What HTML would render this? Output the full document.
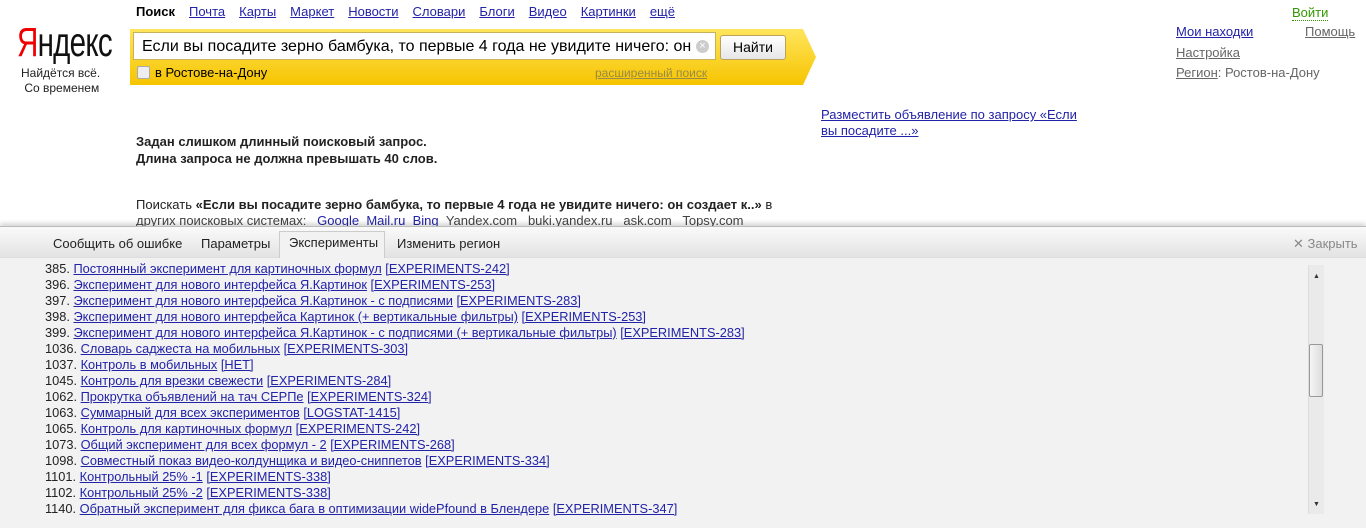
<!DOCTYPE html>
<html><head><meta charset="utf-8"><style>
body{margin:0;width:1366px;height:527px;overflow:hidden;background:#fff;font-family:"Liberation Sans",Arial,sans-serif;font-size:13px;position:relative}
a{color:#2323a8}
.abs{position:absolute;white-space:nowrap}
.nav a{margin-right:14px}
.g{color:#666}
#panel{position:absolute;left:0;top:226px;width:1366px;height:301px;background:#f2f2f2;border-top:1px solid #bbb;box-shadow:0 -3px 4px rgba(0,0,0,.15);overflow:hidden}
#tabs{height:30px;background:linear-gradient(#fafafa,#e3e3e3);position:relative;border-bottom:1px solid #ddd;z-index:2}
.tab{position:absolute;top:9px;font-size:13px;color:#222}
#list{position:absolute;left:45px;top:34px;font-size:12.8px;line-height:16px;color:#222;white-space:nowrap}
</style></head><body>
<div class="abs" style="left:17px;top:18px;font-size:41px;line-height:48px;letter-spacing:-1px;transform:scaleX(.72);transform-origin:left;color:#111"><span style="color:#e00">Я</span>ндекс</div>
<div class="abs" style="left:21px;top:66px;font-size:12px;color:#222;line-height:15px">Найдётся всё.<br>&nbsp;Со временем</div>
<div class="abs nav" style="left:136px;top:4px"><b style="margin-right:14px">Поиск</b><a href="#">Почта</a><a href="#">Карты</a><a href="#">Маркет</a><a href="#">Новости</a><a href="#">Словари</a><a href="#">Блоги</a><a href="#">Видео</a><a href="#">Картинки</a><a href="#">ещё</a></div>
<svg class="abs" style="left:130px;top:29px" width="688" height="56"><defs><linearGradient id="y" x1="0" y1="0" x2="0" y2="1"><stop offset="0" stop-color="#ffe55c"/><stop offset="1" stop-color="#f6c400"/></linearGradient></defs><path d="M0 0H673L686 28L673 56H0Z" fill="url(#y)"/></svg>
<div class="abs" style="left:133px;top:32px;height:28px;background:#fff;border:1px solid #c9b35a;font-size:16px;line-height:28px;padding-left:8px;box-sizing:border-box;width:583px">Если вы посадите зерно бамбука, то первые 4 года не увидите ничего: он<span style="position:absolute;right:6px;top:7px;width:13px;height:13px;border-radius:50%;background:#ccc;color:#fff;font-size:11px;line-height:13px;text-align:center">×</span></div>
<div class="abs" style="left:720px;top:35px;width:66px;height:25px;border:1px solid #b9a35a;border-radius:3px;background:linear-gradient(#fff,#e6e6e6);box-sizing:border-box;text-align:center;line-height:23px;font-size:14px">Найти</div>
<div class="abs" style="left:137px;top:66px;width:11px;height:11px;border:1px solid #aaa;border-radius:2px;background:#eee"></div>
<div class="abs" style="left:155px;top:65px;font-size:13px">в Ростове-на-Дону</div>
<div class="abs" style="left:595px;top:66px;font-size:12px;color:#998a45;text-decoration:underline">расширенный поиск</div>
<div class="abs" style="left:1292px;top:5px;color:#390;border-bottom:1px dotted #390">Войти</div>
<a class="abs" href="#" style="left:1176px;top:24px">Мои находки</a>
<a class="abs g" href="#" style="left:1305px;top:24px">Помощь</a>
<a class="abs g" href="#" style="left:1176px;top:45px">Настройка</a>
<div class="abs g" style="left:1176px;top:65px"><u>Регион</u>: Ростов-на-Дону</div>
<div class="abs" style="left:821px;top:107px;line-height:16px"><a href="#">Разместить объявление по запросу «Если<br>вы посадите ...»</a></div>
<div class="abs" style="left:136px;top:133px;font-weight:bold;line-height:17px;color:#222">Задан слишком длинный поисковый запрос.<br>Длина запроса не должна превышать 40 слов.</div>
<div class="abs" style="left:136px;top:197px;color:#222">Поискать <b>«Если вы посадите зерно бамбука, то первые 4 года не увидите ничего: он создает к..»</b> в</div>
<div class="abs" style="left:136px;top:213px;color:#444">других поисковых системах: &nbsp; <a href="#">Google</a> &nbsp;<a href="#">Mail.ru</a> &nbsp;<a href="#">Bing</a> &nbsp;Yandex.com &nbsp; buki.yandex.ru &nbsp; ask.com &nbsp; Topsy.com</div>
<div id="panel">
<div id="tabs">
<span class="tab" style="left:53px">Сообщить об ошибке</span>
<span class="tab" style="left:201px">Параметры</span>
<div style="position:absolute;left:279px;top:4px;width:106px;height:27px;background:#f2f2f2;border:1px solid #ccc;border-bottom:none;box-sizing:border-box"></div>
<span class="tab" style="left:289px;top:8px">Эксперименты</span>
<span class="tab" style="left:397px">Изменить регион</span>
<span class="tab" style="left:1293px;color:#888">✕ Закрыть</span>
</div>
<div id="list">
<div>385. <a href="#">Постоянный эксперимент для картиночных формул</a> <a href="#">[EXPERIMENTS-242]</a></div>
<div>396. <a href="#">Эксперимент для нового интерфейса Я.Картинок</a> <a href="#">[EXPERIMENTS-253]</a></div>
<div>397. <a href="#">Эксперимент для нового интерфейса Я.Картинок - с подписями</a> <a href="#">[EXPERIMENTS-283]</a></div>
<div>398. <a href="#">Эксперимент для нового интерфейса Картинок (+ вертикальные фильтры)</a> <a href="#">[EXPERIMENTS-253]</a></div>
<div>399. <a href="#">Эксперимент для нового интерфейса Я.Картинок - с подписями (+ вертикальные фильтры)</a> <a href="#">[EXPERIMENTS-283]</a></div>
<div>1036. <a href="#">Словарь саджеста на мобильных</a> <a href="#">[EXPERIMENTS-303]</a></div>
<div>1037. <a href="#">Контроль в мобильных</a> <a href="#">[НЕТ]</a></div>
<div>1045. <a href="#">Контроль для врезки свежести</a> <a href="#">[EXPERIMENTS-284]</a></div>
<div>1062. <a href="#">Прокрутка объявлений на тач СЕРПе</a> <a href="#">[EXPERIMENTS-324]</a></div>
<div>1063. <a href="#">Суммарный для всех экспериментов</a> <a href="#">[LOGSTAT-1415]</a></div>
<div>1065. <a href="#">Контроль для картиночных формул</a> <a href="#">[EXPERIMENTS-242]</a></div>
<div>1073. <a href="#">Общий эксперимент для всех формул - 2</a> <a href="#">[EXPERIMENTS-268]</a></div>
<div>1098. <a href="#">Совместный показ видео-колдунщика и видео-сниппетов</a> <a href="#">[EXPERIMENTS-334]</a></div>
<div>1101. <a href="#">Контрольный 25% -1</a> <a href="#">[EXPERIMENTS-338]</a></div>
<div>1102. <a href="#">Контрольный 25% -2</a> <a href="#">[EXPERIMENTS-338]</a></div>
<div>1140. <a href="#">Обратный эксперимент для фикса бага в оптимизации widePfound в Блендере</a> <a href="#">[EXPERIMENTS-347]</a></div>
</div>
<div style="position:absolute;left:1308px;top:38px;width:15px;height:249px;background:#eaeaea;border-left:1px solid #ddd">
<div style="position:absolute;left:4px;top:8px;font-size:7px;color:#333">▲</div>
<div style="position:absolute;left:0;top:79px;width:14px;height:53px;border:1px solid #999;border-radius:2px;background:linear-gradient(90deg,#f5f5f5,#ddd);box-sizing:border-box"></div>
<div style="position:absolute;left:4px;top:236px;font-size:7px;color:#333">▼</div>
</div>
</div>
</body></html>
